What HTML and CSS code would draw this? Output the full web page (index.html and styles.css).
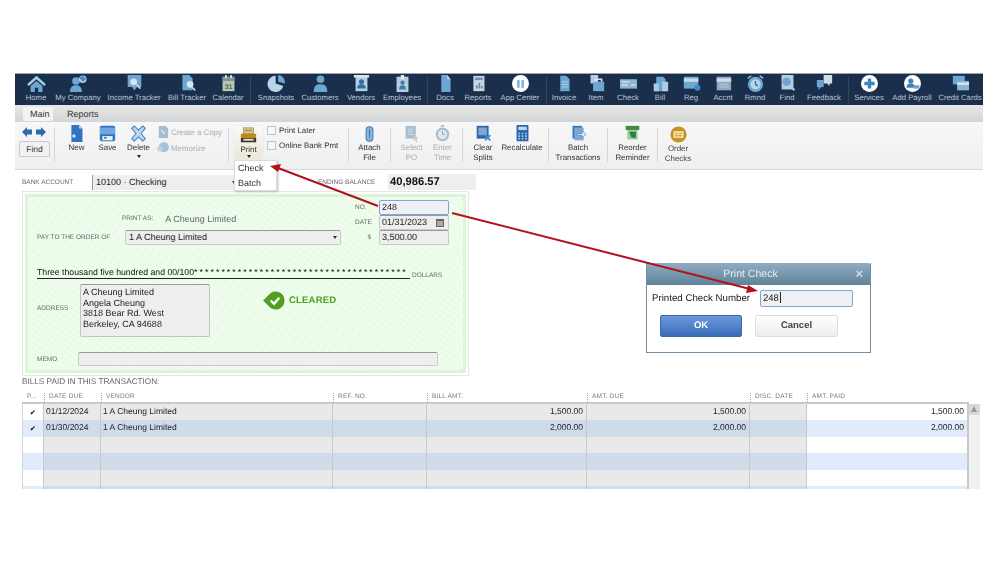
FILE: index.html
```html
<!DOCTYPE html>
<html lang="en">
<head>
<meta charset="utf-8">
<title>Print Check</title>
<link rel="stylesheet" href="styles.css">
</head>
<body>
<div class="page">
<div class="app">
  <nav class="topbar">
    <div class="tool home"><svg viewBox="0 0 24 20"><path d="M12 1 1 11l2 2 9-8 9 8 2-2z" fill="#a9cde8"/><path d="M5 13l7-6 7 6v7h-5v-5h-4v5H5z" fill="#6ea6d2"/></svg><span>Home</span></div>
    <div class="tool company"><svg viewBox="0 0 24 20"><circle cx="9" cy="7" r="4.5" fill="#6ea6d2"/><path d="M2 20c0-6 3-8 7-8s7 2 7 8z" fill="#6ea6d2"/><circle cx="17" cy="5" r="4.5" fill="#a9cde8"/><path d="M13 3l4-2 4 4-4 3z" fill="#4d84b3"/></svg><span>My Company</span></div>
    <div class="tool income"><svg viewBox="0 0 24 20"><path d="M4 0h16v14l-5 0-3 4-3-4H4z" fill="#6ea6d2"/><circle cx="11" cy="8" r="4" fill="#d9e4ec"/><path d="M14 11l5 5" stroke="#c9d6df" stroke-width="2"/></svg><span>Income Tracker</span></div>
    <div class="tool bill"><svg viewBox="0 0 24 20"><path d="M6 0h8l4 4v14H6z" fill="#6ea6d2"/><circle cx="15" cy="11" r="4" fill="#d9e4ec"/><path d="M17 14l4 4" stroke="#c9d6df" stroke-width="2"/></svg><span>Bill Tracker</span></div>
    <div class="tool calendar"><svg viewBox="0 0 24 20"><rect x="5" y="2" width="14" height="17" fill="#b8c8a8"/><rect x="5" y="2" width="14" height="5" fill="#7c9396"/><rect x="8" y="0" width="2" height="4" fill="#d9e4ec"/><rect x="14" y="0" width="2" height="4" fill="#d9e4ec"/><text x="12" y="17" class="cal">31</text></svg><span>Calendar</span></div>
    <i class="bar"></i>
    <div class="tool"><svg viewBox="0 0 24 20"><path d="M11 1a9.500 9.500 0 1 0 9 12l-9-3z" fill="#b9d4e8"/><path d="M14 0a9 9 0 0 1 8 10l-8-2z" fill="#6ea6d2"/></svg><span>Snapshots</span></div>
    <div class="tool"><svg viewBox="0 0 24 20"><circle cx="12" cy="5" r="4.500" fill="#6ea6d2"/><path d="M4 20c0-7 3-9 8-9s8 2 8 9z" fill="#6ea6d2"/></svg><span>Customers</span></div>
    <div class="tool"><svg viewBox="0 0 24 20"><rect x="5" y="1" width="14" height="18" fill="#b6cfe0"/><rect x="3" y="0" width="18" height="3" fill="#dbe5ec"/><circle cx="12" cy="8" r="3" fill="#2f6fa3"/><path d="M7 16c0-4 2-5 5-5s5 1 5 5z" fill="#2f6fa3"/></svg><span>Vendors</span></div>
    <div class="tool"><svg viewBox="0 0 24 20"><rect x="5" y="2" width="14" height="18" fill="#b6cfe0"/><rect x="10" y="0" width="4" height="5" fill="#e1e8ed"/><circle cx="12" cy="9" r="2.500" fill="#3f7aa8"/><path d="M8 17c0-4 2-5 4-5s4 1 4 5z" fill="#3f7aa8"/></svg><span>Employees</span></div>
    <i class="bar"></i>
    <div class="tool"><svg viewBox="0 0 24 20"><path d="M7 0h7l4 5v15H7z" fill="#6ea6d2"/><path d="M14 0l4 5h-4z" fill="#b9d4e8"/></svg><span>Docs</span></div>
    <div class="tool"><svg viewBox="0 0 24 20"><rect x="6" y="1" width="13" height="18" fill="#c9d6df"/><rect x="8" y="3" width="9" height="3" fill="#7390a6"/><path d="M9 16v-4h2v4zM12 16v-7h2v7zM15 16v-3h2v3z" fill="#5f8eb3"/></svg><span>Reports</span></div>
    <div class="tool app-c"><svg viewBox="0 0 24 20"><circle cx="12" cy="10" r="10" fill="#fff"/><path d="M8 6h8v9H8z" fill="#7fb0d6"/><path d="M11 4h2v11h-2z" fill="#fff"/></svg><span>App Center</span></div>
    <i class="bar"></i>
    <div class="tool"><svg viewBox="0 0 24 20"><path d="M7 1h7l4 4v14H7z" fill="#6ea6d2"/><path d="M9 8h7M9 11h7M9 14h7" stroke="#bcd6ea"/></svg><span>Invoice</span></div>
    <div class="tool"><svg viewBox="0 0 24 20"><rect x="5" y="0" width="9" height="10" fill="#b6cfe0"/><rect x="8" y="8" width="13" height="11" fill="#6ea6d2"/><path d="M11 8V5h7v3" fill="none" stroke="#d9e4ec" stroke-width="2"/></svg><span>Item</span></div>
    <div class="tool"><svg viewBox="0 0 24 20"><rect x="2" y="5" width="20" height="11" fill="#8db6d6"/><path d="M4 8h9M15 12h5M4 12h7" stroke="#dce8f0" stroke-width="1.500"/></svg><span>Check</span></div>
    <div class="tool"><svg viewBox="0 0 24 20"><path d="M7 2h8l3 3v14H7z" fill="#6ea6d2"/><path d="M4 10h6v9H4zM14 8h7v11h-7z" fill="#a9cde8"/></svg><span>Bill</span></div>
    <div class="tool"><svg viewBox="0 0 24 20"><rect x="3" y="2" width="17" height="14" fill="#6ea6d2"/><rect x="3" y="4" width="17" height="4" fill="#c9d9e6"/><circle cx="19" cy="15" r="3.500" fill="#3c8ac6"/></svg><span>Reg</span></div>
    <div class="tool"><svg viewBox="0 0 24 20"><rect x="4" y="2" width="17" height="16" fill="#8aa9c2"/><rect x="4" y="4" width="17" height="4" fill="#cfdce6"/><path d="M7 11h11M7 14h11" stroke="#c3d5e2"/></svg><span>Accnt</span></div>
    <div class="tool"><svg viewBox="0 0 24 20"><circle cx="12" cy="11" r="9" fill="#6ea6d2"/><circle cx="12" cy="11" r="6" fill="#b9d4e8"/><path d="M12 7v4l3 2" fill="none" stroke="#35678f" stroke-width="1.500"/><path d="M3 4l4-3M21 4l-4-3" stroke="#8dbce0" stroke-width="2"/></svg><span>Rmnd</span></div>
    <div class="tool"><svg viewBox="0 0 24 20"><rect x="5" y="0" width="14" height="17" fill="#b6cfe0"/><circle cx="11" cy="8" r="5" fill="#6ea6d2"/><path d="M15 12l5 6" stroke="#a9cde8" stroke-width="2.500"/></svg><span>Find</span></div>
    <div class="tool"><svg viewBox="0 0 24 20"><path d="M11 0h10v10h-3v3l-3-3h-4z" fill="#cfdde8"/><path d="M3 6h8v8H8l-3 4v-4H3z" fill="#6ea6d2"/></svg><span>Feedback</span></div>
    <i class="bar"></i>
    <div class="tool"><svg viewBox="0 0 24 20"><circle cx="12" cy="10" r="10" fill="#fff"/><path d="M10 4h4v4h4v4h-4v4h-4v-4H6V8h4z" fill="#3c82bb"/></svg><span>Services</span></div>
    <div class="tool"><svg viewBox="0 0 24 20"><circle cx="12" cy="10" r="10" fill="#fff"/><circle cx="10" cy="7" r="3" fill="#3f7fb3"/><path d="M5 15c0-4 2-5 5-5s4 1 5 3v2z" fill="#3f7fb3"/><rect x="13" y="12" width="7" height="4" fill="#6ea6d2"/></svg><span>Add Payroll</span></div>
    <div class="tool"><svg viewBox="0 0 24 20"><rect x="3" y="1" width="14" height="10" fill="#6ea6d2"/><rect x="8" y="7" width="14" height="11" fill="#8db6d6"/><rect x="8" y="9" width="14" height="2.500" fill="#dce8f0"/></svg><span>Credit Cards</span></div>
  </nav>

  <div class="tabs">
    <span class="tab active">Main</span>
    <span class="tab">Reports</span>
  </div>

  <div class="ribbon">
    <div class="nav-group">
      <div class="arrows">
        <svg viewBox="0 0 24 10"><path d="M0 5l5-5v2.500h5v5H5V10zM24 5l-5-5v2.500h-5v5h5V10z" fill="#2a6cb0"/></svg>
      </div>
      <div class="find">Find</div>
    </div>
    <i class="sep"></i>
    <div class="rb w31 first"><svg viewBox="0 0 20 20"><path d="M4 0h9l4 4v16H4z" fill="#2f74bd"/><path d="M13 0l4 4h-4z" fill="#bcd8f0"/><circle cx="7" cy="13" r="2" fill="#cfe3f4"/></svg><span>New</span></div>
    <div class="rb w31"><svg viewBox="0 0 20 20"><rect x="1" y="1" width="18" height="18" rx="2" fill="#2f74bd"/><rect x="1" y="3" width="18" height="8" fill="#6fa8dc"/><rect x="4" y="13" width="12" height="5" fill="#e9f1f8"/><rect x="6" y="14" width="3" height="2" fill="#2f74bd"/></svg><span>Save</span></div>
    <div class="rb w31"><svg viewBox="0 0 20 20"><path d="M2 4l3-3 5 5 5-5 3 3-5 6 5 6-3 3-5-5-5 5-3-3 5-6z" fill="#bdd6ee" stroke="#3f80bf" stroke-width="1.200"/></svg><span>Delete</span><b class="caret"></b></div>
    <div class="stack copies dim">
      <div class="line"><svg viewBox="0 0 14 14"><path d="M2 0h8l3 3v11H2z" fill="#a8bdd0"/><path d="M5 5l4 4" stroke="#e4ecf2" stroke-width="1.500"/></svg>Create a Copy</div>
      <div class="line"><svg viewBox="0 0 14 14"><circle cx="8" cy="6" r="6" fill="#a8c4dc"/><circle cx="3" cy="8" r="3" fill="#c4d6e4"/></svg>Memorize</div>
    </div>
    <i class="sep"></i>
    <div class="print">
      <svg viewBox="0 0 20 20"><rect x="4" y="1" width="12" height="7" fill="#d8c586" stroke="#8b7a3c" stroke-width=".7"/><path d="M6 4h8" stroke="#8b7a3c"/><rect x="1" y="8" width="18" height="5" fill="#b98a1e"/><rect x="1" y="13" width="18" height="5" fill="#3e3a33"/><rect x="4" y="14" width="12" height="2" fill="#efe9d2"/></svg>
      <span>Print</span><b class="caret"></b>
      <div class="menu"><div>Check</div><div>Batch</div></div>
    </div>
    <div class="stack checks">
      <div class="line"><i class="box"></i>Print Later</div>
      <div class="line"><i class="box"></i>Online Bank Pmt</div>
    </div>
    <i class="sep"></i>
    <div class="rb attach"><svg viewBox="0 0 20 20"><path d="M6 6a4 4 0 0 1 8 0v9a4 4 0 0 1-8 0z" fill="#8cb4d8" stroke="#3f7fb3" stroke-width="1.200"/><path d="M10 5v10" stroke="#2f6a9e"/></svg><span>Attach<br>File</span></div>
    <i class="sep"></i>
    <div class="rb w31 dim po"><svg viewBox="0 0 20 20"><rect x="3" y="1" width="12" height="15" fill="#a6bfd3"/><path d="M6 5h6M6 8h6M6 11h6" stroke="#dbe6ee"/><path d="M13 11l5 5-2 1 1 3-2 0-1-3-2 1z" fill="#c1cfd9"/></svg><span>Select<br>PO</span></div>
    <div class="rb w31 dim time"><svg viewBox="0 0 20 20"><circle cx="10" cy="11" r="8" fill="#a6bfd3"/><circle cx="10" cy="11" r="5.500" fill="#dfe8ee"/><path d="M10 7v4h3" fill="none" stroke="#7f9bb0"/><rect x="8" y="0" width="4" height="2" fill="#a6bfd3"/></svg><span>Enter<br>Time</span></div>
    <i class="sep"></i>
    <div class="rb clear"><svg viewBox="0 0 20 20"><rect x="2" y="1" width="14" height="15" fill="#2b64a8"/><rect x="4" y="3" width="10" height="9" fill="#7ea8d2"/><path d="M12 12l6 6M18 12l-6 6" stroke="#3d8fd6" stroke-width="2"/></svg><span>Clear<br>Splits</span></div>
    <div class="rb recalc"><svg viewBox="0 0 20 20"><rect x="3" y="0" width="14" height="19" rx="1" fill="#2b64a8"/><rect x="5" y="2" width="10" height="4" fill="#bcd8f0"/><path d="M5 9h2v2H5zM9 9h2v2H9zM13 9h2v2h-2zM5 12h2v2H5zM9 12h2v2H9zM13 12h2v2h-2zM5 15h2v2H5zM9 15h2v2H9zM13 15h2v2h-2z" fill="#a7c8e6"/></svg><span>Recalculate</span></div>
    <i class="sep"></i>
    <div class="rb batch"><svg viewBox="0 0 20 20"><rect x="3" y="1" width="11" height="15" fill="#2f74bd"/><rect x="5" y="3" width="11" height="15" fill="#7ea8d2"/><path d="M8 10h6V7l5 4-5 4v-3H8z" fill="#e6f0f8" stroke="#2f74bd" stroke-width=".7"/></svg><span>Batch<br>Transactions</span></div>
    <i class="sep"></i>
    <div class="rb reorder"><svg viewBox="0 0 20 20"><rect x="2" y="1" width="16" height="5" fill="#3f8f3f"/><rect x="4" y="6" width="12" height="11" fill="#9cc89c"/><path d="M6 8h8v7H9z" fill="#2f7f3f"/></svg><span>Reorder<br>Reminder</span></div>
    <i class="sep"></i>
    <div class="rb order"><svg viewBox="0 0 20 20"><circle cx="10" cy="10" r="9.500" fill="#c8901e"/><rect x="4" y="6" width="12" height="8" fill="#f4e0a8"/><path d="M6 9h3M11 9h3M6 11.500h8" stroke="#c8901e"/></svg><span>Order<br>Checks</span></div>
  </div>

  <div class="content">
    <div class="bank-row">
      <span class="label bank-label">BANK ACCOUNT</span>
      <div class="bank-select">10100 · Checking<b class="dd"></b></div>
      <span class="label end-label">ENDING BALANCE</span>
      <div class="balance">40,986.57</div>
    </div>

    <section class="check">
      <div class="check-inner">
        <div class="check-top">
          <div class="check-left">
            <div class="print-as"><span class="label">PRINT AS:</span><span class="pa-value">A Cheung Limited</span></div>
            <div class="pay-row"><span class="label pay-label">PAY TO THE ORDER OF</span><div class="field payee">1 A Cheung Limited<b class="dd"></b></div></div>
          </div>
          <div class="check-right">
            <div class="fr"><span class="label fl">NO.</span><div class="field num focus">248</div></div>
            <div class="fr"><span class="label fl">DATE</span><div class="field num">01/31/2023<svg class="cal-ic" viewBox="0 0 8 8"><rect width="8" height="8" fill="#666"/><path d="M1 2h6v5H1z" fill="#aaa"/></svg></div></div>
            <div class="fr"><span class="label fl dollar">$</span><div class="field num">3,500.00</div></div>
          </div>
        </div>
        <div class="amount-row"><div class="words">Three thousand five hundred and 00/100<span class="stars">***************************************</span></div><span class="label">DOLLARS</span></div>
        <div class="addr-row">
          <span class="label addr-label">ADDRESS</span>
          <div class="addr">A Cheung Limited<br>Angela Cheung<br>3818 Bear Rd. West<br>Berkeley, CA 94688</div>
          <div class="cleared">
            <svg viewBox="0 0 24 20"><path d="M0 10 8 2a9.500 9.500 0 1 1 0 16z" fill="#4fa020"/><path d="M8 10l3.500 3.500L17 7" fill="none" stroke="#fff" stroke-width="2.400"/></svg>
            <span>CLEARED</span>
          </div>
        </div>
        <div class="memo-row"><span class="label memo-label">MEMO</span><div class="field memo"></div></div>
      </div>
    </section>

    <h2 class="bills-title">BILLS PAID IN THIS TRANSACTION:</h2>

    <div class="table-wrap">
      <div class="table">
        <div class="row head">
          <span class="c">P...</span><span class="c gr">DATE DUE</span><span class="c gr">VENDOR</span><span class="c gr">REF. NO.</span><span class="c gr">BILL AMT.</span><span class="c gr">AMT. DUE</span><span class="c gr">DISC. DATE</span><span class="c gr">AMT. PAID</span>
        </div>
        <div class="row odd top"><span class="c ck">✔</span><span class="c">01/12/2024</span><span class="c">1 A Cheung Limited</span><span class="c"></span><span class="c r">1,500.00</span><span class="c r">1,500.00</span><span class="c"></span><span class="c r">1,500.00</span></div>
        <div class="row even"><span class="c ck">✔</span><span class="c">01/30/2024</span><span class="c">1 A Cheung Limited</span><span class="c"></span><span class="c r">2,000.00</span><span class="c r">2,000.00</span><span class="c"></span><span class="c r">2,000.00</span></div>
        <div class="row odd"><span class="c"></span><span class="c"></span><span class="c"></span><span class="c"></span><span class="c"></span><span class="c"></span><span class="c"></span><span class="c"></span></div>
        <div class="row even"><span class="c"></span><span class="c"></span><span class="c"></span><span class="c"></span><span class="c"></span><span class="c"></span><span class="c"></span><span class="c"></span></div>
        <div class="row odd"><span class="c"></span><span class="c"></span><span class="c"></span><span class="c"></span><span class="c"></span><span class="c"></span><span class="c"></span><span class="c"></span></div>
        <div class="row even"><span class="c"></span><span class="c"></span><span class="c"></span><span class="c"></span><span class="c"></span><span class="c"></span><span class="c"></span><span class="c"></span></div>
      </div>
      <div class="scroll"><b></b></div>
    </div>
  </div>
</div>

<div class="dialog">
  <div class="dlg-title">Print Check<span class="dlg-x">×</span></div>
  <div class="dlg-row"><label>Printed Check Number</label><div class="dlg-input">248<i class="cursor"></i></div></div>
  <div class="dlg-btns"><div class="btn ok">OK</div><div class="btn cancel">Cancel</div></div>
</div>

<svg class="arrows-layer" viewBox="0 0 999 562">
  <path d="M378 206 278 168" stroke="#b3121d" stroke-width="2" fill="none"/>
  <path d="M270 166l11-2-3 8z" fill="#b3121d"/>
  <path d="M452 213 750 289" stroke="#b3121d" stroke-width="2" fill="none"/>
  <path d="M758 291l-10-6-2 8z" fill="#b3121d"/>
</svg>
</div>
</body>
</html>
```

FILE: styles.css
```css
* { box-sizing: border-box; }
html, body { margin: 0; padding: 0; background: #fff; }
body { font-family: "Liberation Sans", Arial, sans-serif; color: #222; text-rendering: geometricPrecision; }
.page { position: relative; width: 999px; height: 562px; overflow: hidden; padding: 73px 0 0 15px; }
.app { width: 968px; filter: blur(.35px); }

/* top icon bar */
.topbar { height: 32px; background: #1a2f4c; border-top: 1px solid #9aa4b0; padding: 1px 0 0 8px; display: grid; align-items: start;
  grid-template-columns: 26px 58px 54px 52px 30px 14px 38px 50px 32px 50px 1px 34px 32px 52px 1px 34px 30px 34px 30px 32px 32px 32px 32px 42px 6px 36px 50px 46px; }
.tool { display: flex; flex-direction: column; align-items: center; color: #bcc6d1; font-size: 7.700px; white-space: nowrap; }
.tool svg { width: 21px; height: 17px; margin-bottom: 1px; flex: none; }
.tool span { line-height: 10px; }
.cal { font: bold 8px "Liberation Sans", sans-serif; text-anchor: middle; fill: #4a6a7a; }
.bar { display: block; width: 1px; height: 28px; background: #2e4664; margin: 1px auto 0; }

/* tabs */
.tabs { height: 17px; background: linear-gradient(#e8e8e8, #d4d5d6); display: flex; align-items: flex-end; padding-left: 8px; font-size: 9px; color: #333; border-bottom: 1px solid #cfd8e2; }
.tab { height: 14px; padding: 1px 7px 0; line-height: 12px; margin-left: 7px; }
.tab.active { background: #f3f3f3; padding: 1px 7px 0; width: 30px; margin-left: 0; }

/* ribbon */
.ribbon { height: 48px; background: linear-gradient(#f7f7f7, #efefef); border-bottom: 1px solid #d8d8d8; display: flex; align-items: flex-start; padding: 3px 0 0 4px; font-size: 7.900px; color: #333; }
.nav-group { width: 35px; flex: none; }
.arrows svg { display: block; width: 24px; height: 10px; margin: 2px 0 4px 3px; }
.find { width: 31px; height: 16px; background: #f2f2f2; border: 1px solid #c9c9c9; border-radius: 2px; text-align: center; line-height: 14px; font-size: 8.500px; }
.sep { width: 1px; height: 34px; background: #d5d5d5; margin-top: 3px; flex: none; }
.rb { position: relative; display: flex; flex-direction: column; align-items: center; text-align: center; line-height: 9.500px; flex: none; }
.rb svg { width: 17px; height: 17px; margin-bottom: 1px; }
.w31 { width: 31px; }
.first { margin-left: 6px; }
.po { margin-left: 5px; }
.time { margin-right: 4px; }
.caret { display: block; width: 0; height: 0; border: 2px solid transparent; border-top: 3px solid #222; margin-top: 2px; }
.stack { flex: none; }
.copies { width: 71px; margin: -1px 0 0 3px; }
.line { display: flex; align-items: center; height: 16px; white-space: nowrap; gap: 2px; }
.line svg { width: 12px; height: 12px; flex: none; }
.dim { color: #a5adb4; }
.print { position: relative; width: 31px; height: 35px; margin: 0 3px 0 4px; background: linear-gradient(#f9f9f9, #ece7d6); border: 1px solid #eee; display: flex; flex-direction: column; align-items: center; line-height: 9px; flex: none; }
.print svg { width: 19px; height: 17px; margin: 1px 0 1px; flex: none; }
.print .caret { margin-top: 1px; }
.menu { position: absolute; left: 0; top: 34px; width: 43px; height: 31px; background: #fff; border: 1px solid #ddd; box-shadow: 1px 1px 2px #bbb; font-size: 9px; z-index: 3; padding: 0 3px; }
.menu div { height: 14.500px; line-height: 14.500px; }
.box { display: block; width: 9px; height: 9px; background: #f6f8fb; border: 1px solid #b9c4d1; margin-right: 1px; flex: none; }
.checks { width: 81px; margin: -2px 0 0 0; }
.checks .line { height: 15px; }
.attach { width: 41px; }
.clear { width: 40px; }
.recalc { width: 38px; margin-right: 7px; }
.batch { width: 58px; }
.reorder { width: 49px; }
.order { width: 40px; padding-top: 1px; }
.order span { color: #444; }

/* content */
.content { padding-left: 7px; }
.label { font-size: 6.500px; color: #6b6b6b; white-space: nowrap; }
.bank-row { display: flex; align-items: center; height: 21px; padding-top: 3px; }
.bank-label { width: 70px; }
.bank-select { position: relative; width: 148px; height: 15px; background: #eee; border-left: 1px solid #999; font-size: 9px; padding-left: 3px; line-height: 14px; color: #222; }
.bank-select .dd { right: 4px; top: 6px; }
.end-label { margin-left: 78px; width: 70px; }
.balance { width: 88px; height: 16px; background: #eeeeee; font-size: 11.200px; font-weight: bold; line-height: 16px; color: #111; padding-left: 2px; }

.check { width: 447px; height: 185px; background: #fff; border: 1px solid #e5e5e5; padding: 2px; }
.check-inner { height: 179px; background-color: #eefdec; background-image: repeating-linear-gradient(35deg, rgba(160, 215, 160, .07) 0 1px, transparent 1px 5px), repeating-linear-gradient(-55deg, rgba(160, 215, 160, .07) 0 1px, transparent 1px 7px); border: 3px solid #dcf5d8; padding: 3px 14px 0 9px; }
.check-top { display: flex; justify-content: space-between; align-items: flex-end; }
.print-as { padding-left: 85px; display: flex; align-items: center; gap: 12px; height: 15px; margin-bottom: 4px; }
.pa-value { font-size: 9px; color: #666; }
.pay-row { display: flex; align-items: center; height: 15px; }
.pay-label { width: 88px; }
.field { background: #eeeeee; border: 1px solid #c9c9c9; border-top-color: #999; border-radius: 2px; font-size: 9px; color: #222; position: relative; }
.payee { width: 216px; height: 15px; line-height: 13px; padding-left: 3px; }
.dd { position: absolute; right: 3px; top: 5px; border: 2.500px solid transparent; border-top: 3px solid #333; }
.check-right { display: flex; flex-direction: column; }
.fr { display: flex; align-items: center; justify-content: flex-end; gap: 8px; height: 15px; }
.fl { width: 16px; }
.dollar { text-align: right; }
.num { width: 70px; height: 15px; line-height: 13px; padding-left: 2px; }
.focus { border: 1px solid #7ea5d6; background: #eef1f5; }
.cal-ic { position: absolute; right: 4px; top: 3px; width: 8px; height: 8px; }
.amount-row { display: flex; align-items: flex-end; margin-top: 21px; gap: 2px; }
.words { width: 373px; height: 13px; border-bottom: 1px solid #222; font-size: 8.700px; line-height: 12px; white-space: nowrap; color: #111; }
.stars { letter-spacing: 2.100px; }
.addr-row { display: flex; align-items: flex-start; margin-top: 5px; }
.addr-label { width: 43px; margin-top: 21px; }
.addr { width: 130px; height: 53px; background: #eee; border: 1px solid #c4c4c4; border-top-color: #999; border-radius: 2px; font-size: 9px; line-height: 10.500px; padding: 2px 2px; color: #222; }
.cleared { display: flex; align-items: center; gap: 3px; margin: 7px 0 0 53px; color: #4fa020; font-size: 9.500px; font-weight: bold; letter-spacing: .2px; }
.cleared svg { width: 23px; height: 19px; }
.memo-row { display: flex; align-items: center; margin-top: 15px; }
.memo-label { width: 41px; }
.memo { width: 360px; height: 14px; }

.bills-title { margin: 0; font-size: 8.200px; font-weight: normal; color: #666; height: 16px; line-height: 11px; padding-top: 0; }

.table-wrap { display: flex; width: 958px; height: 97px; overflow: hidden; }
.table { width: 947px; flex: none; }
.row { display: grid; grid-template-columns: 22px 57px 232px 94px 160px 163px 57px 162px; height: 16.500px; font-size: 8.500px; color: #222; }
.head { height: 12px; font-size: 6.500px; color: #7b7b7b; border-bottom: 2px solid #c9c9c9; letter-spacing: .2px; }
.head .c { line-height: 10px; padding-left: 5px; border: 0; background: none; }
.head .gr { background-image: linear-gradient(#aaa 50%, transparent 50%); background-size: 1px 2px; background-repeat: repeat-y; background-position: 0 1px; }
.top { height: 16px; }
.c { padding: 0 2px; line-height: 14px; white-space: nowrap; overflow: hidden; border-right: 1px solid #c9c9c9; }
.r { text-align: right; padding-right: 3px; }
.ck { text-align: center; font-size: 7.500px; color: #111; padding-top: 2px; }
.odd .c { background: #e9e9e9; }
.even .c { background: #cedbe9; }
.odd .c:first-child, .odd .c:last-child { background: #fff; }
.even .c:first-child, .even .c:last-child { background: #e0ecfb; }
.row .c:last-child { border-right: 2px solid #c9c9c9; }
.head .c:last-child { border-right: 0; }
.row .c:first-child { border-left: 1px solid #d4d4d4; }
.head .c:first-child { border-left: 0; }
.scroll { width: 11px; margin-top: 12px; background: #f1f1f1; }
.scroll b { display: block; height: 11px; background: #d8d8d8; position: relative; }
.scroll b::after { content: ""; position: absolute; left: 2px; top: 2px; border: 3.500px solid transparent; border-top: 0; border-bottom: 6px solid #999; }

/* dialog */
.dialog { position: absolute; left: 646px; top: 263px; width: 225px; height: 90px; background: #fff; border: 1px solid #6f8ea4; border-top: 0; filter: blur(.3px); }
.dlg-title { height: 22px; padding-right: 16px; background: linear-gradient(#8fadc1, #5f8398); color: #e6edf2; text-align: center; font-size: 10.500px; line-height: 22px; position: relative; border-radius: 2px 2px 0 0; }
.dlg-x { position: absolute; right: 7px; top: 0; font-size: 13px; font-weight: bold; color: #d3dde4; }
.dlg-row { display: flex; align-items: center; padding: 5px 0 0 5px; font-size: 9.700px; color: #222; }
.dlg-row label { width: 108px; }
.dlg-input { width: 93px; height: 17px; background: #eef1f4; border: 1px solid #7ea5d6; border-radius: 2px; padding-left: 2px; line-height: 15px; font-size: 9.500px; }
.cursor { display: inline-block; width: 1px; height: 11px; background: #222; vertical-align: -2px; margin-left: 1px; }
.dlg-btns { display: flex; gap: 13px; padding: 8px 0 0 13px; }
.btn { width: 83px; height: 22px; border-radius: 2px; text-align: center; line-height: 20px; font-size: 9.500px; font-weight: bold; }
.ok { width: 82px; background: linear-gradient(#6b9adb, #3a6cb8); color: #fff; border: 1px solid #3d68a8; }
.cancel { background: linear-gradient(#fff, #ededed); color: #444; border: 1px solid #ddd; }

.arrows-layer { position: absolute; left: 0; top: 0; width: 999px; height: 562px; pointer-events: none; }
```
